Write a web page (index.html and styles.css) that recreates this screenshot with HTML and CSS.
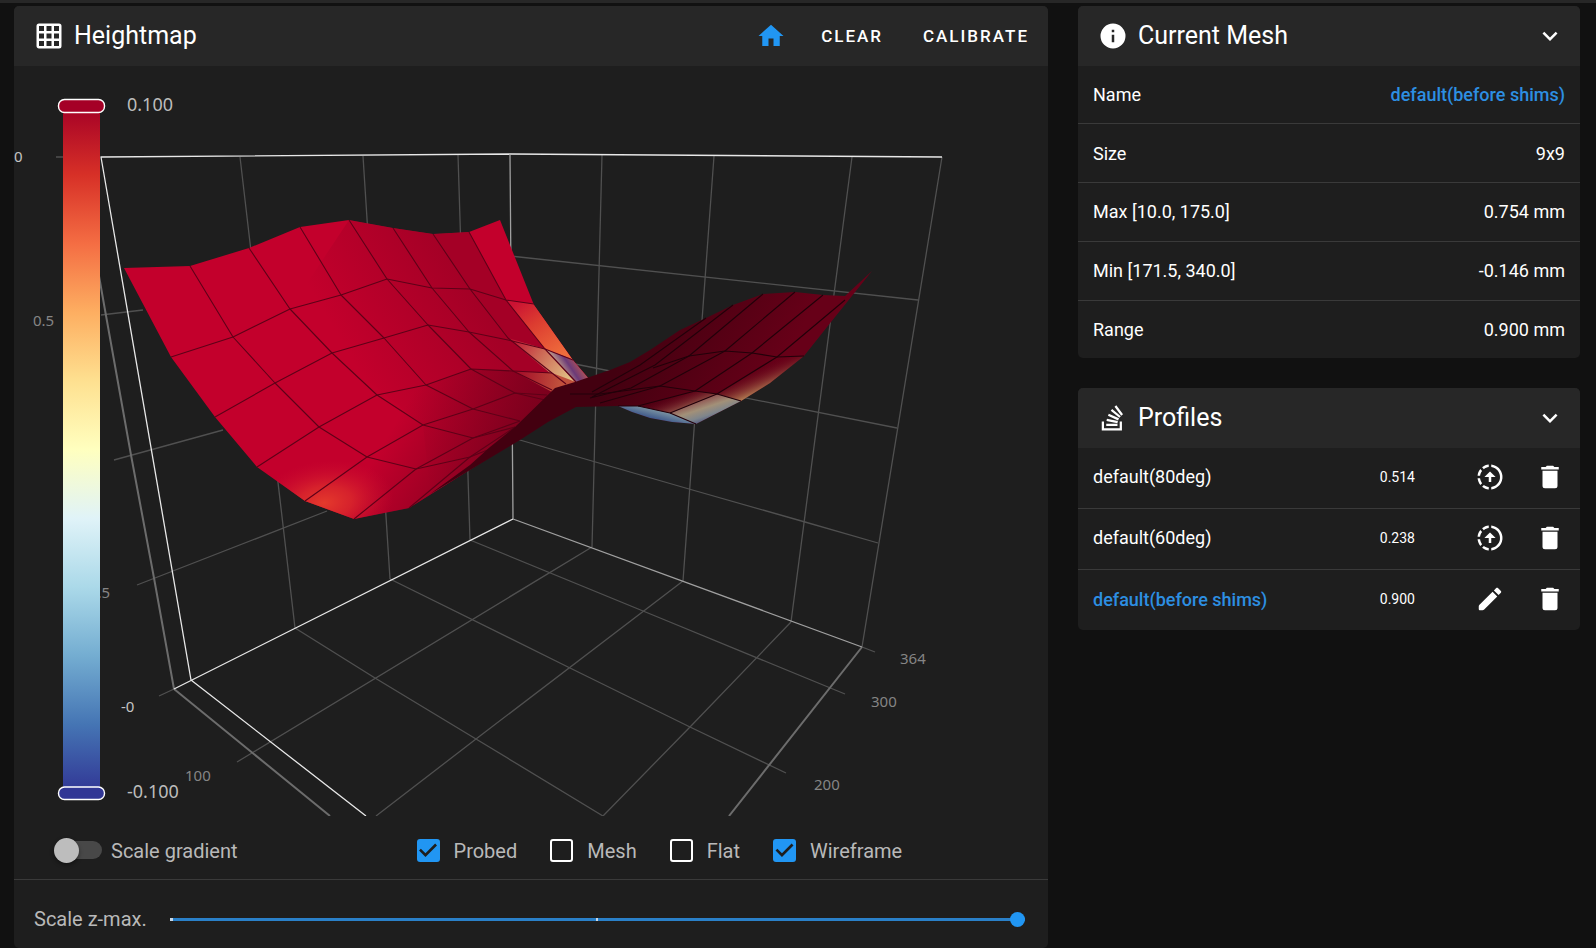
FILE: index.html
```html
<!DOCTYPE html>
<html lang="en">
<head>
    <meta charset="UTF-8">
    <meta name="viewport" content="width=device-width, initial-scale=1.0">
    <title>Heightmap</title>
    <link rel="stylesheet" href="styles.css">
</head>
<body>
    <div class="topbar"></div>
    <main class="row">
        <div class="col col-main">
            <section class="panel">
                <header class="panel-header">
                    <svg class="icon" viewBox="0 0 24 24"><path fill-rule="evenodd" d="M10,4V8H14V4H10M16,4V8H20V4H16M16,10V14H20V10H16M16,16V20H20V16H16M14,20V16H10V20H14M8,20V16H4V20H8M8,14V10H4V14H8M8,8V4H4V8H8M10,14H14V10H10V14M4,2H20A2,2 0 0,1 22,4V20A2,2 0 0,1 20,22H4C2.92,22 2,21.1 2,20V4A2,2 0 0,1 4,2Z"/></svg>
                    <h2>Heightmap</h2>
                    <div class="actions">
                        <button class="icon-button home" type="button" aria-label="Home">
                            <svg class="icon" viewBox="0 0 24 24"><path d="M10,20V14H14V20H19V12H22L12,3L2,12H5V20H10Z"/></svg>
                        </button>
                        <button class="text-button" type="button">CLEAR</button>
                        <button class="text-button" type="button">CALIBRATE</button>
                    </div>
                </header>

                <svg class="chart" viewBox="14 66 1034 750">
                    <defs>
                        <linearGradient id="scale" x1="0" y1="0" x2="0" y2="1">
                            <stop offset="0" stop-color="#a50026"/>
                            <stop offset="0.1" stop-color="#d73027"/>
                            <stop offset="0.2" stop-color="#f46d43"/>
                            <stop offset="0.3" stop-color="#fdae61"/>
                            <stop offset="0.4" stop-color="#fee090"/>
                            <stop offset="0.5" stop-color="#ffffbf"/>
                            <stop offset="0.6" stop-color="#e0f3f8"/>
                            <stop offset="0.7" stop-color="#abd9e9"/>
                            <stop offset="0.8" stop-color="#74add1"/>
                            <stop offset="0.9" stop-color="#4575b4"/>
                            <stop offset="1" stop-color="#313695"/>
                        </linearGradient>
                        <linearGradient id="shade" gradientUnits="userSpaceOnUse" x1="340" y1="340" x2="460" y2="270">
                            <stop offset="0" stop-color="#850020" stop-opacity="0"/>
                            <stop offset="1" stop-color="#850020" stop-opacity="0.5"/>
                        </linearGradient>
                        <linearGradient id="foot" gradientUnits="userSpaceOnUse" x1="385" y1="440" x2="485" y2="500">
                            <stop offset="0" stop-color="#6e001a" stop-opacity="0"/>
                            <stop offset="1" stop-color="#6e001a" stop-opacity="0.75"/>
                        </linearGradient>
                        <radialGradient id="glow" gradientUnits="userSpaceOnUse" cx="0" cy="0" r="70" gradientTransform="translate(324 503) rotate(-8) scale(1 .6)">
                            <stop offset="0" stop-color="#e53a2c"/>
                            <stop offset="0.4" stop-color="#db2a2c" stop-opacity="0.8"/>
                            <stop offset="1" stop-color="#cc0c30" stop-opacity="0"/>
                        </radialGradient>
                        <linearGradient id="orange" gradientUnits="userSpaceOnUse" x1="520" y1="300" x2="560" y2="356">
                            <stop offset="0" stop-color="#cb1233"/>
                            <stop offset="0.4" stop-color="#dc3c30"/>
                            <stop offset="1" stop-color="#ef6d3c"/>
                        </linearGradient>
                        <linearGradient id="beige" gradientUnits="userSpaceOnUse" x1="510" y1="338" x2="570" y2="382">
                            <stop offset="0" stop-color="#bd0a2e"/>
                            <stop offset="0.45" stop-color="#cc6654"/>
                            <stop offset="1" stop-color="#e3c487"/>
                        </linearGradient>
                        <linearGradient id="rust" gradientUnits="userSpaceOnUse" x1="512" y1="372" x2="560" y2="382">
                            <stop offset="0" stop-color="#a00426"/>
                            <stop offset="1" stop-color="#c0503c"/>
                        </linearGradient>
                        <linearGradient id="violet" gradientUnits="userSpaceOnUse" x1="562" y1="372" x2="580" y2="360">
                            <stop offset="0" stop-color="#c09a88"/>
                            <stop offset="0.45" stop-color="#6b3a78"/>
                            <stop offset="1" stop-color="#c05a50"/>
                        </linearGradient>
                        <linearGradient id="wing" gradientUnits="userSpaceOnUse" x1="640" y1="330" x2="760" y2="400">
                            <stop offset="0" stop-color="#430010"/>
                            <stop offset="1" stop-color="#670018"/>
                        </linearGradient>
                        <linearGradient id="sand" gradientUnits="userSpaceOnUse" x1="752" y1="370" x2="762" y2="393">
                            <stop offset="0" stop-color="#670018" stop-opacity="0"/>
                            <stop offset="1" stop-color="#b98a58"/>
                        </linearGradient>
                        <linearGradient id="valley" gradientUnits="userSpaceOnUse" x1="698" y1="395" x2="708" y2="425">
                            <stop offset="0" stop-color="#84303a"/>
                            <stop offset="0.45" stop-color="#a29078"/>
                            <stop offset="0.7" stop-color="#7e858c"/>
                            <stop offset="1" stop-color="#343d78"/>
                        </linearGradient>
                        <linearGradient id="blush" gradientUnits="userSpaceOnUse" x1="674" y1="394" x2="681" y2="412">
                            <stop offset="0" stop-color="#670018" stop-opacity="0"/>
                            <stop offset="1" stop-color="#98644f"/>
                        </linearGradient>
                        <linearGradient id="deep" gradientUnits="userSpaceOnUse" x1="652" y1="408" x2="649" y2="420">
                            <stop offset="0" stop-color="#7f98a4"/>
                            <stop offset="1" stop-color="#304a84"/>
                        </linearGradient>
                        <clipPath id="face">
                            <path d="M124,268L190,266 249,248 300,227 349,220 393,228 433,234 469,232 500,220 534,305 573,360 590,380 576,395 514,442 409,508 354,519 305,501 257,467 215,417 171,357Z"/>
                        </clipPath>
                    </defs>

                    <!-- grid of the walls and the floor -->
                    <g class="grid-lines">
                        <path d="M240,157L295,628M363,156L390,579M458,155L470,540"/>
                        <path d="M602,155L592,547M714,156L683,581M852,157L791,622M942,157L862,647"/>
                        <path d="M101,315L143,310M114,460L223,430M137,585L327,511"/>
                        <path d="M510,256L918,300M575,364L897,428M513,438L592,461 689,489 805,522 878,543"/>
                        <path d="M237,762L592,547M376,816L476,739 683,581M603,816L690,727 791,622"/>
                        <path d="M295,628L375,678 476,739 603,816M390,579L570,668 690,727 786,773M470,540L665,620 845,694M862,647L875,652M159,696L174,689M56,157H78"/>
                    </g>
                    <path class="axis-soft" d="M78,157L105,310 131,455 154,578 174,689 330,816M862,647L729,816"/>
                    <path class="axis-mid" d="M510,155L513,519L862,647"/>
                    <path class="axis" d="M366,816L191,680 101,157 510,154 942,157M174,689L513,519"/>

                    <!-- front face of the mesh -->
                    <g clip-path="url(#face)">
                        <rect class="face" x="120" y="210" width="490" height="320"/>
                        <path fill="url(#shade)" d="M349,220L393,228 433,234 469,232 506,300 546,350 588,378 590,410 514,445 430,490 423,425 332,353 290,309Z"/>
                        <path fill="url(#foot)" d="M257,467L319,427 377,395 426,385 471,369 513,371 560,380 590,400 514,450 409,515 354,525Z"/>
                        <rect fill="url(#glow)" x="240" y="440" width="170" height="85"/>
                        <path fill="url(#orange)" d="M506,300L534,304 573,360 545,349Z"/>
                        <path fill="url(#beige)" d="M508,338L545,349 576,383 556,378Z"/>
                        <path fill="url(#violet)" d="M545,349L572,359 590,380 576,383Z"/>
                        <path fill="url(#rust)" d="M513,371L552,373 576,382 552,392Z"/>
                    </g>
                    <g class="wire">
                        <path d="M171,357L233,337 290,309 341,295 387,279 432,288 470,289 506,300 534,304"/>
                        <path d="M215,417L275,383 332,353 384,338 428,325 469,332 508,340 545,349 573,360"/>
                        <path d="M257,467L319,427 377,395 426,385 471,369 513,371 552,373"/>
                        <path d="M305,501L367,457 423,425 473,409 515,393 547,395"/>
                        <path d="M354,519L416,469 473,438 520,421M409,508L470,457 515,427"/>
                        <path d="M190,266L233,337 275,383 319,427 367,457 416,469 470,457 505,443"/>
                        <path d="M249,248L290,309 332,353 377,395 423,425 473,438 515,427"/>
                        <path d="M300,227L341,295 384,338 426,385 473,409 520,421"/>
                        <path d="M349,220L387,279 428,325 471,369 515,393 545,400"/>
                        <path d="M393,228L432,288 469,332 513,371 552,390"/>
                        <path d="M433,234L470,289 508,338 552,373 566,384"/>
                        <path d="M469,232L506,300 545,349 576,382"/>
                    </g>

                    <!-- underside of the mesh -->
                    <path fill="url(#wing)" d="M430,494L470,465 490,447 515,427 555,388 575,382 610,370 630,362 650,350 680,330 706,318 733,305 763,294 795,292 823,295 845,296 872,271 831,322 804,356 770,383 741,401 696,424 672,422 650,418 632,412 618,406 576,407 548,422 520,440 490,458Z"/>
                    <path fill="url(#sand)" d="M717,394L775,357 804,356 770,383 741,401Z"/>
                    <path fill="url(#blush)" d="M638,406L695,391 717,394 670,413Z"/>
                    <path fill="url(#valley)" d="M670,413L717,394 741,401 696,424Z"/>
                    <path fill="url(#deep)" d="M618,406L638,406 670,413 696,424 672,422 650,418 632,412Z"/>
                    <g class="wire wire-dark">
                        <path d="M653,368L689,356 725,351 752,353 777,357 804,356"/>
                        <path d="M570,394L600,394 630,390 660,386 695,391 717,394 741,401"/>
                        <path d="M618,406L638,406 670,413 696,424"/>
                        <path d="M706,318L640,365 592,392M733,305L655,365 592,397M763,294L689,356 631,388 590,398"/>
                        <path d="M795,292L725,351 660,386 600,403M823,295L752,353 695,391 638,406M845,300L777,357 717,394 670,413"/>
                    </g>

                    <g class="axis-labels">
                        <text class="bright" x="14" y="162">0</text>
                        <text x="33" y="326">0.5</text>
                        <text x="110" y="598" text-anchor="end">-0.5</text>
                        <text class="bright" x="121" y="712">-0</text>
                        <text x="185" y="781">100</text>
                        <text x="900" y="664">364</text>
                        <text x="871" y="707">300</text>
                        <text x="814" y="790">200</text>
                    </g>

                    <rect fill="url(#scale)" x="63" y="106" width="37" height="687"/>
                    <rect class="handle handle-max" x="58.5" y="99.5" width="46" height="13" rx="6"/>
                    <rect class="handle handle-min" x="58.5" y="787" width="46" height="12.5" rx="6"/>
                    <g class="scale-labels">
                        <text x="127" y="111">0.100</text>
                        <text x="127" y="798">-0.100</text>
                    </g>
                </svg>

                <div class="options">
                    <label class="option scale-option"><input class="switch" type="checkbox" role="switch">Scale gradient</label>
                    <div class="layers">
                        <label class="option"><input class="checkbox" type="checkbox" checked>Probed</label>
                        <label class="option"><input class="checkbox" type="checkbox">Mesh</label>
                        <label class="option"><input class="checkbox" type="checkbox">Flat</label>
                        <label class="option"><input class="checkbox" type="checkbox" checked>Wireframe</label>
                    </div>
                </div>

                <div class="z-scale">
                    <label for="zmax">Scale z-max.</label>
                    <input class="slider" id="zmax" type="range" min="0" max="2" step="0.1" value="2">
                </div>
            </section>
        </div>

        <div class="col col-side">
            <section class="panel">
                <header class="panel-header">
                    <svg class="icon" viewBox="0 0 24 24"><path d="M13,9H11V7H13M13,17H11V11H13M12,2A10,10 0 0,0 2,12A10,10 0 0,0 12,22A10,10 0 0,0 22,12A10,10 0 0,0 12,2Z"/></svg>
                    <h2>Current Mesh</h2>
                    <button class="icon-button collapse" type="button" aria-label="Collapse">
                        <svg class="icon" viewBox="0 0 24 24"><path d="M7.41,8.58L12,13.17L16.59,8.58L18,10L12,16L6,10L7.41,8.58Z"/></svg>
                    </button>
                </header>
                <table class="table mesh-table">
                    <tr><th scope="row">Name</th><td class="active">default(before shims)</td></tr>
                    <tr><th scope="row">Size</th><td>9x9</td></tr>
                    <tr><th scope="row">Max [10.0, 175.0]</th><td>0.754 mm</td></tr>
                    <tr><th scope="row">Min [171.5, 340.0]</th><td>-0.146 mm</td></tr>
                    <tr><th scope="row">Range</th><td>0.900 mm</td></tr>
                </table>
            </section>

            <section class="panel">
                <header class="panel-header">
                    <svg class="icon" viewBox="0 0 24 24"><path d="M17.36,20.2V14.82H19.15V22H3V14.82H4.8V20.2H17.36M6.77,14.32L7.14,12.56L15.93,14.41L15.56,16.17L6.77,14.32M7.93,10.11L8.69,8.5L16.83,12.28L16.07,13.9L7.93,10.11M10.19,6.12L11.34,4.74L18.24,10.5L17.09,11.87L10.19,6.12M14.64,1.87L20,9.08L18.56,10.15L13.2,2.94L14.64,1.87M6.59,18.41V16.61H15.57V18.41H6.59Z"/></svg>
                    <h2>Profiles</h2>
                    <button class="icon-button collapse" type="button" aria-label="Collapse">
                        <svg class="icon" viewBox="0 0 24 24"><path d="M7.41,8.58L12,13.17L16.59,8.58L18,10L12,16L6,10L7.41,8.58Z"/></svg>
                    </button>
                </header>
                <table class="table profile-table">
                    <tr>
                        <th scope="row">default(80deg)</th>
                        <td class="range">0.514</td>
                        <td class="tool"><button class="icon-button" type="button" aria-label="Load"><svg class="icon" viewBox="0 0 24 24"><path d="M13,2.03V2.05L13,4.05C17.39,4.59 20.5,8.58 19.96,12.97C19.5,16.61 16.64,19.5 13,19.93V21.93C18.5,21.38 22.5,16.5 21.95,11C21.5,6.25 17.73,2.5 13,2.03M11,2.06C9.05,2.25 7.19,3 5.67,4.26L7.1,5.74C8.22,4.84 9.57,4.26 11,4.06V2.06M4.26,5.67C3,7.19 2.25,9.04 2.05,11H4.05C4.24,9.58 4.8,8.23 5.69,7.1L4.26,5.67M2.06,13C2.26,14.96 3.03,16.81 4.27,18.33L5.69,16.9C4.81,15.77 4.24,14.42 4.06,13H2.06M7.1,18.37L5.67,19.74C7.18,21 9.04,21.79 11,22V20C9.58,19.82 8.23,19.25 7.1,18.37M12,7.5L7.5,12H11V16H13V12H16.5L12,7.5Z"/></svg></button></td>
                        <td class="tool"><button class="icon-button" type="button" aria-label="Delete"><svg class="icon" viewBox="0 0 24 24"><path d="M19,4H15.5L14.5,3H9.5L8.5,4H5V6H19M6,19A2,2 0 0,0 8,21H16A2,2 0 0,0 18,19V7H6V19Z"/></svg></button></td>
                    </tr>
                    <tr>
                        <th scope="row">default(60deg)</th>
                        <td class="range">0.238</td>
                        <td class="tool"><button class="icon-button" type="button" aria-label="Load"><svg class="icon" viewBox="0 0 24 24"><path d="M13,2.03V2.05L13,4.05C17.39,4.59 20.5,8.58 19.96,12.97C19.5,16.61 16.64,19.5 13,19.93V21.93C18.5,21.38 22.5,16.5 21.95,11C21.5,6.25 17.73,2.5 13,2.03M11,2.06C9.05,2.25 7.19,3 5.67,4.26L7.1,5.74C8.22,4.84 9.57,4.26 11,4.06V2.06M4.26,5.67C3,7.19 2.25,9.04 2.05,11H4.05C4.24,9.58 4.8,8.23 5.69,7.1L4.26,5.67M2.06,13C2.26,14.96 3.03,16.81 4.27,18.33L5.69,16.9C4.81,15.77 4.24,14.42 4.06,13H2.06M7.1,18.37L5.67,19.74C7.18,21 9.04,21.79 11,22V20C9.58,19.82 8.23,19.25 7.1,18.37M12,7.5L7.5,12H11V16H13V12H16.5L12,7.5Z"/></svg></button></td>
                        <td class="tool"><button class="icon-button" type="button" aria-label="Delete"><svg class="icon" viewBox="0 0 24 24"><path d="M19,4H15.5L14.5,3H9.5L8.5,4H5V6H19M6,19A2,2 0 0,0 8,21H16A2,2 0 0,0 18,19V7H6V19Z"/></svg></button></td>
                    </tr>
                    <tr>
                        <th scope="row" class="active">default(before shims)</th>
                        <td class="range">0.900</td>
                        <td class="tool"><button class="icon-button" type="button" aria-label="Edit"><svg class="icon" viewBox="0 0 24 24"><path d="M20.71,7.04C21.1,6.65 21.1,6 20.71,5.63L18.37,3.29C18,2.9 17.35,2.9 16.96,3.29L15.12,5.12L18.87,8.87M14.06,6.18L3.6,16.64C3.2,17 3,17.5 3,18V20C3,20.6 3.4,21 4,21H6C6.5,21 7,20.8 7.36,20.4L17.81,9.93L14.06,6.18Z"/></svg></button></td>
                        <td class="tool"><button class="icon-button" type="button" aria-label="Delete"><svg class="icon" viewBox="0 0 24 24"><path d="M19,4H15.5L14.5,3H9.5L8.5,4H5V6H19M6,19A2,2 0 0,0 8,21H16A2,2 0 0,0 18,19V7H6V19Z"/></svg></button></td>
                    </tr>
                </table>
            </section>
        </div>
    </main>
</body>
</html>
```
FILE: styles.css
```css
* {
    box-sizing: border-box;
}
body {
    margin: 0;
    background-color: #111111;
    color: #ffffff;
    font-family: Roboto, "Liberation Sans", sans-serif;
    font-size: 18px;
}
.topbar {
    height: 3px;
    margin-bottom: 3px;
    background-color: #272727;
}
.row {
    display: flex;
}
.col {
    padding: 0 16px 0 14px;
}
.col-main {
    width: 66.6667%;
}
.col-side {
    width: 33.3333%;
    display: flex;
    flex-direction: column;
    gap: 30px;
}
.panel {
    background-color: #1e1e1e;
    border-radius: 5px;
    overflow: hidden;
}
.panel-header {
    display: flex;
    align-items: center;
    gap: 10px;
    height: 60px;
    padding: 0 15px 0 20px;
    background-color: #272727;
}
.panel-header h2 {
    margin: 0;
    font-size: 25px;
    line-height: 32px;
    font-weight: 400;
}
.icon {
    display: block;
    flex: none;
    width: 30px;
    height: 30px;
    fill: currentColor;
}
button {
    padding: 0;
    border: none;
    background: none;
    color: #ffffff;
    font-family: inherit;
    cursor: pointer;
}
.actions {
    display: flex;
    align-items: center;
    gap: 40px;
    margin-left: auto;
    padding-right: 4px;
}
.home {
    margin-right: -5px;
    color: #2196f3;
}
.text-button {
    font-size: 17px;
    font-weight: 500;
    letter-spacing: 2px;
}
.collapse {
    margin-left: auto;
}

/* Chart */
.chart {
    display: block;
    width: 100%;
}
.chart path {
    stroke-linejoin: round;
}
.grid-lines {
    fill: none;
    stroke: #505050;
    stroke-width: 1.3;
}
.axis, .axis-mid, .axis-soft {
    fill: none;
    stroke: #e8e8e8;
    stroke-width: 1.3;
}
.axis-mid {
    stroke: #a0a0a0;
}
.axis-soft {
    stroke: #6c6c6c;
    stroke-width: 2;
}
.face {
    fill: #c3002c;
}
.wire {
    fill: none;
    stroke: #5e0018;
    stroke-width: 1.1;
}
.wire-dark {
    stroke: #22000a;
}
.axis-labels, .scale-labels {
    font-family: "Noto Sans", sans-serif;
    font-size: 15px;
    fill: #858585;
}
.axis-labels .bright {
    fill: #c4c4c4;
}
.scale-labels {
    font-size: 18px;
    fill: #bcbcbc;
}
.handle {
    stroke: #ffffff;
    stroke-width: 1.4;
}
.handle-max {
    fill: #a50026;
}
.handle-min {
    fill: #313695;
}

/* Options under the chart */
.options {
    display: flex;
    align-items: center;
    height: 64px;
    padding: 6px 40px 0 40px;
    border-bottom: 1px solid #3a3a3a;
    color: #b9b9b9;
    font-size: 20px;
}
.option {
    display: flex;
    align-items: center;
    gap: 14px;
}
.scale-option {
    flex: 0 0 38%;
    gap: 9px;
}
.layers {
    display: flex;
    gap: 33px;
}
.switch {
    position: relative;
    appearance: none;
    width: 48px;
    height: 25px;
    margin: 0;
}
.switch::before {
    content: "";
    position: absolute;
    inset: 3px 0 4px 10px;
    border-radius: 9px;
    background-color: #484848;
}
.switch::after {
    content: "";
    position: absolute;
    left: 0;
    top: 0;
    width: 25px;
    height: 25px;
    border-radius: 50%;
    background-color: #bdbdbd;
    box-shadow: 0 2px 4px rgba(0, 0, 0, 0.4);
}
.checkbox {
    appearance: none;
    width: 23px;
    height: 23px;
    margin: 0;
    border: 2px solid #ffffff;
    border-radius: 3px;
}
.checkbox:checked {
    border: none;
    background-color: #2196f3;
}
.checkbox:checked::before {
    content: "";
    display: block;
    height: 100%;
    background-color: #1e1e1e;
    clip-path: polygon(39% 78%, 11% 50%, 19% 42%, 39% 62%, 81% 20%, 89% 28%);
}
.z-scale {
    display: flex;
    align-items: center;
    gap: 23px;
    height: 68px;
    padding: 10px 23px 0 20px;
    color: #b9b9b9;
    font-size: 20px;
}
.slider {
    appearance: none;
    flex: 1;
    height: 16px;
    margin: 0;
    background:
        linear-gradient(#c8d8e8, #c8d8e8) left center / 3px 3px no-repeat,
        linear-gradient(#c8d8e8, #c8d8e8) center / 2px 3px no-repeat,
        linear-gradient(#2a80c8, #2a80c8) center / 100% 3px no-repeat;
}
.slider::-webkit-slider-thumb {
    appearance: none;
    width: 15px;
    height: 15px;
    border-radius: 50%;
    background-color: #2196f3;
}

/* Side tables */
.table {
    width: 100%;
    border-collapse: collapse;
}
.table th, .table td {
    padding: 0 15px;
    font-weight: 400;
    text-align: left;
}
.table tr + tr {
    border-top: 1px solid #3a3a3a;
}
.table .active {
    color: #2d8fe2;
    font-weight: 500;
}
.mesh-table {
    height: 292px;
}
.mesh-table td {
    text-align: right;
}
.profile-table {
    height: 182px;
}
.profile-table th {
    padding-bottom: 2px;
}
.profile-table .range {
    width: 90px;
    padding: 0 15px 2px 0;
    font-size: 14px;
    text-align: right;
}
.profile-table .tool {
    width: 60px;
    padding: 2px 15px 0;
}
.profile-table .range + .tool {
    width: 90px;
    padding-left: 45px;
}
```
